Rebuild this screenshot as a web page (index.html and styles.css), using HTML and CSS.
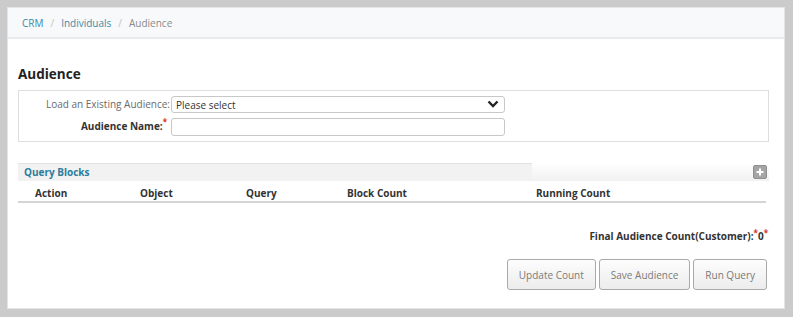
FILE: index.html
```html
<!DOCTYPE html>
<html lang="en">
  <head>
    <meta charset="UTF-8" />
    <meta name="viewport" content="width=device-width, initial-scale=1.0" />
    <title>Audience</title>
    <link rel="stylesheet" href="styles.css">
  </head>
  <body>
    <div class="panel">
      <div class="breadcrumb">
        <a href="#">CRM</a>
        <span class="sep">/</span>
        <a href="#">Individuals</a>
        <span class="sep">/</span>
        <span class="current">Audience</span>
      </div>

      <div class="content">
        <h2>Audience</h2>

        <div class="form-box">
          <div class="form-row">
            <label for="existing">Load an Existing Audience:</label>
            <div class="select-wrap">
              <select id="existing">
                <option>Please select</option>
              </select>
              <svg class="chevron" width="12" height="8" viewBox="0 0 12 8">
                <path d="M1.5 1.5 L6 6 L10.5 1.5" fill="none" stroke="#222" stroke-width="2.4" />
              </svg>
            </div>
          </div>
          <div class="form-row">
            <label for="name" class="strong">Audience Name:<span class="req">*</span></label>
            <input type="text" id="name" />
          </div>
        </div>

        <div class="blocks-head">
          <div class="blocks-title">Query Blocks</div>
          <div class="blocks-fade">
            <span class="add-btn">
              <svg width="8" height="8" viewBox="0 0 8 8">
                <path d="M4 0.5 V7.5 M0.5 4 H7.5" stroke="#fff" stroke-width="2" />
              </svg>
            </span>
          </div>
        </div>

        <div class="table-head">
          <span class="col-action">Action</span>
          <span class="col-object">Object</span>
          <span class="col-query">Query</span>
          <span class="col-block">Block Count</span>
          <span class="col-running">Running Count</span>
        </div>

        <div class="final-count">
          Final Audience Count(Customer):<span class="req">*</span>0<span class="req">*</span>
        </div>

        <div class="actions">
          <button>Update Count</button>
          <button>Save Audience</button>
          <button>Run Query</button>
        </div>
      </div>
    </div>
  </body>
</html>
```

FILE: styles.css
```css
* {
  margin: 0;
  padding: 0;
  box-sizing: border-box;
  font-family: "Open Sans", Arial, sans-serif;
}

body {
  background: #cbcbcb;
  padding: 7px 8px 8px 7px;
  height: 317px;
  overflow: hidden;
}

.panel {
  background: #fff;
  border: 1px solid #e4e4e4;
  height: 302px;
}

.breadcrumb {
  background: #f7f9fb;
  border-bottom: 2px solid #e8eaec;
  height: 31px;
  padding: 0 14px;
  display: flex;
  align-items: center;
  gap: 7px;
  font-size: 10px;
}

.breadcrumb a {
  color: #3f8aa8;
  text-decoration: none;
}

.breadcrumb .current {
  color: #8a8a8a;
}

.breadcrumb .sep {
  color: #c4c4c4;
}

.content {
  padding: 26px 15px 0 10px;
}

h2 {
  font-size: 13.5px;
  font-weight: bold;
  color: #222;
  margin-bottom: 7px;
}

.form-box {
  border: 1px solid #dedede;
  height: 52px;
  padding-top: 5px;
}

.form-row {
  display: flex;
  align-items: center;
  height: 17px;
  margin-bottom: 5px;
}

.form-row label {
  width: 152px;
  text-align: right;
  font-size: 10px;
  line-height: 17px;
  color: #6a6a6a;
  padding-right: 1px;
}

.form-row label.strong {
  font-weight: bold;
  color: #333;
  padding-right: 4px;
}

.req {
  color: #d9342b;
  font-size: 8px;
  line-height: 8px;
  vertical-align: top;
}

.select-wrap {
  position: relative;
  width: 334px;
  height: 17px;
}

select,
input {
  display: block;
  width: 334px;
  height: 17px;
  border: 1px solid #c8c8c8;
  border-radius: 3px;
  background: #fff;
  font-size: 10px;
  color: #333;
  padding: 0 4px;
  outline: none;
}

select {
  appearance: none;
}

input {
  height: 18px;
}

.chevron {
  position: absolute;
  right: 6px;
  top: 4px;
}

.blocks-head {
  margin-top: 21px;
  display: flex;
  height: 18px;
}

.blocks-title {
  width: 514px;
  background: #f2f2f2;
  border-top: 1px solid #e2e2e2;
  color: #2d7c9c;
  font-size: 10px;
  font-weight: bold;
  padding: 1px 6px 0;
}

.blocks-fade {
  flex: 1;
  background: linear-gradient(#fff, #f1f1f1);
  display: flex;
  justify-content: flex-end;
  align-items: center;
  padding-right: 2px;
}

.add-btn {
  width: 14px;
  height: 14px;
  background: #a5a5a5;
  border: 1px solid #8f8f8f;
  border-radius: 2px;
  display: flex;
  align-items: center;
  justify-content: center;
}

.table-head {
  display: flex;
  height: 22px;
  align-items: center;
  border-bottom: 2px solid #d4d4d4;
  margin-right: 3px;
  font-size: 10px;
  font-weight: bold;
  color: #333;
  padding-top: 3px;
}

.table-head span {
  display: block;
}

.col-action {
  width: 122px;
  padding-left: 17px;
}

.col-object {
  width: 106px;
}

.col-query {
  width: 101px;
}

.col-block {
  width: 189px;
}

.final-count {
  text-align: right;
  font-size: 10px;
  font-weight: bold;
  color: #333;
  margin-top: 26px;
  padding-right: 1px;
}

.actions {
  display: flex;
  justify-content: flex-end;
  gap: 3px;
  margin-top: 16px;
  margin-right: 2px;
}

button {
  height: 31px;
  border: 1px solid #a9a9a9;
  border-radius: 3px;
  background: linear-gradient(#fdfdfd, #ececec);
  color: #7a7a7a;
  font-size: 10px;
  padding: 0 11px;
}
```
